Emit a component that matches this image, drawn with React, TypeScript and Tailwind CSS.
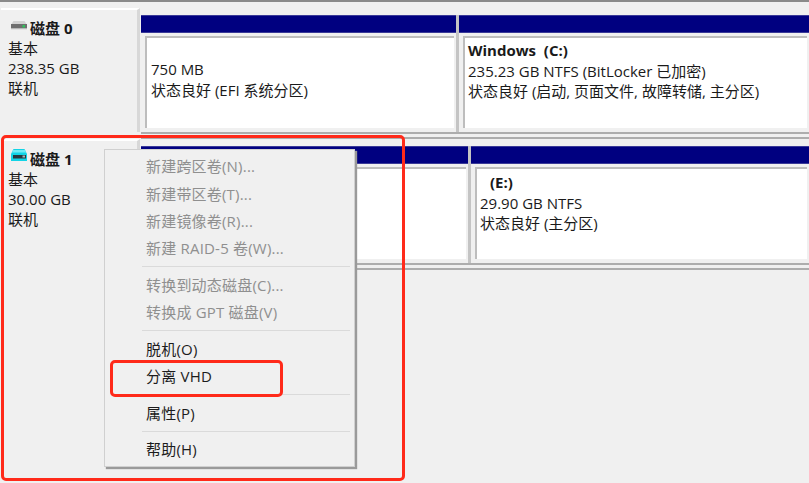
import React from 'react';

const FONT = "font-['Open_Sans','Noto_Sans_CJK_SC',sans-serif]";

function GrayDisk() {
  return (
    <svg width="18" height="14" viewBox="0 -2 18 14" className="shrink-0 -mt-[2px]">
      <path d="M1.5 5 L3.5 2 H14.5 L16.5 5 Z" fill="#d2d2d2" />
      <rect x="1" y="5" width="16" height="4.5" fill="#6e6e6e" />
      <rect x="1" y="9.5" width="16" height="0.8" fill="#c0c0c0" />
      <rect x="12.5" y="6" width="2.5" height="2.5" fill="#2fc25a" />
    </svg>
  );
}

function CyanDisk() {
  return (
    <svg width="18" height="14" viewBox="0 -2 18 14" className="shrink-0 -mt-[2px]">
      <path d="M1 4 L3.5 -1 H14.5 L17 4 V11 H1 Z" fill="#12d4e6" />
      <path d="M3 0 H15 L16 2.5 H2 Z" fill="#6fecf6" />
      <rect x="3" y="5" width="13" height="3.5" fill="#27393f" />
      <rect x="12.5" y="5.5" width="2.5" height="2" fill="#9fb8bc" />
    </svg>
  );
}

function DiskLabel({ name, size, icon }: { name: string; size: string; icon: React.ReactNode }) {
  return (
    <div className="ml-px w-[139px] h-full pl-[7px] pt-[9px] border-t-2 border-t-white border-r-[3px] border-r-[#d8d8d8] text-[15px] leading-[20px] text-[#1a1a1a]">
      <div className="h-[19px] flex items-start gap-[2px] pl-[2px] font-bold leading-[19px]">
        {icon}
        <span>{name}</span>
      </div>
      <div>基本</div>
      <div>{size}</div>
      <div>联机</div>
    </div>
  );
}

function Partition({ width, children }: { width: string; children?: React.ReactNode }) {
  return (
    <div className={`${width} h-full flex flex-col border-r-[3px] border-r-[#c4c4c4] last:border-r-0`}>
      <div className="h-[18px] bg-[#000080] border-y border-y-[#3a3a98]" />
      <div className="flex-1 mt-[3px] mb-[4px] ml-1 mr-[2px] bg-white border-l-2 border-t-2 border-[#bdbdbd] text-[15px] leading-[20.5px] text-[#1a1a1a] pl-1 last:pl-[3px]">
        {children}
      </div>
    </div>
  );
}

function MenuItem({ label, disabled }: { label: string; disabled?: boolean }) {
  return (
    <div className={`h-[27.3px] pl-[41px] flex items-center whitespace-nowrap ${disabled ? 'text-[#8f8f8f]' : 'text-[#1c1c1c]'}`}>
      {label}
    </div>
  );
}

function MenuSep({ wide }: { wide?: boolean }) {
  return <div className={`h-px ml-[37px] mr-[4px] mt-[4px] bg-[#dadada] ${wide ? 'mb-[5px]' : 'mb-[4px]'}`} />;
}

function RowLines() {
  return <div className="h-[7px] ml-[141px] border-y-2 border-[#adadad]" />;
}

export default function App() {
  return (
    <div className={`relative w-[809px] h-[483px] overflow-hidden bg-[#f0f0f0] ${FONT}`}>
      <div className="h-[2px] bg-[#8a8a8a]" />

      <div className="mt-[6px] h-[124px] flex items-stretch">
        <DiskLabel name="磁盘 0" size="238.35 GB" icon={<GrayDisk />} />
        <div className="flex-1 ml-px h-[117px] mt-[7px] flex">
          <Partition width="w-[318px]">
            <div className="pt-[21px] pl-px">750 MB</div>
            <div className="pl-px">状态良好 (EFI 系统分区)</div>
          </Partition>
          <Partition width="flex-1">
            <div className="font-bold pt-[2px]">Windows&nbsp; (C:)</div>
            <div>235.23 GB NTFS (BitLocker 已加密)</div>
            <div>状态良好 (启动, 页面文件, 故障转储, 主分区)</div>
          </Partition>
        </div>
      </div>

      <RowLines />

      <div className="h-[124px] flex items-stretch">
        <DiskLabel name="磁盘 1" size="30.00 GB" icon={<CyanDisk />} />
        <div className="flex-1 ml-px h-[117px] mt-[7px] flex">
          <Partition width="w-[330px]" />
          <Partition width="flex-1">
            <div className="font-bold pl-[10px] pt-[3px]">(E:)</div>
            <div>29.90 GB NTFS</div>
            <div>状态良好 (主分区)</div>
          </Partition>
        </div>
      </div>

      <RowLines />

      {/* context menu */}
      <div className="absolute left-[104px] top-[149px] w-[251px] h-[318px] pt-[3px] bg-[#f0f0f0] border border-[#d0d0d0] shadow-[2px_2px_1px_#9a9a9a] text-[15px] tracking-[0.2px]">
        <MenuItem label="新建跨区卷(N)..." disabled />
        <MenuItem label="新建带区卷(T)..." disabled />
        <MenuItem label="新建镜像卷(R)..." disabled />
        <MenuItem label="新建 RAID-5 卷(W)..." disabled />
        <MenuSep />
        <MenuItem label="转换到动态磁盘(C)..." disabled />
        <MenuItem label="转换成 GPT 磁盘(V)" disabled />
        <MenuSep wide />
        <MenuItem label="脱机(O)" />
        <MenuItem label="分离 VHD" />
        <MenuSep />
        <MenuItem label="属性(P)" />
        <MenuSep />
        <MenuItem label="帮助(H)" />
      </div>

      {/* red annotations */}
      <div className="absolute left-[1px] top-[135px] w-[404px] h-[346px] border-[3px] border-[#ff2a1a] rounded-[5px]" />
      <div className="absolute left-[110px] top-[360px] w-[173px] h-[37px] border-[3px] border-[#ff2a1a] rounded-[5px]" />
    </div>
  );
}
